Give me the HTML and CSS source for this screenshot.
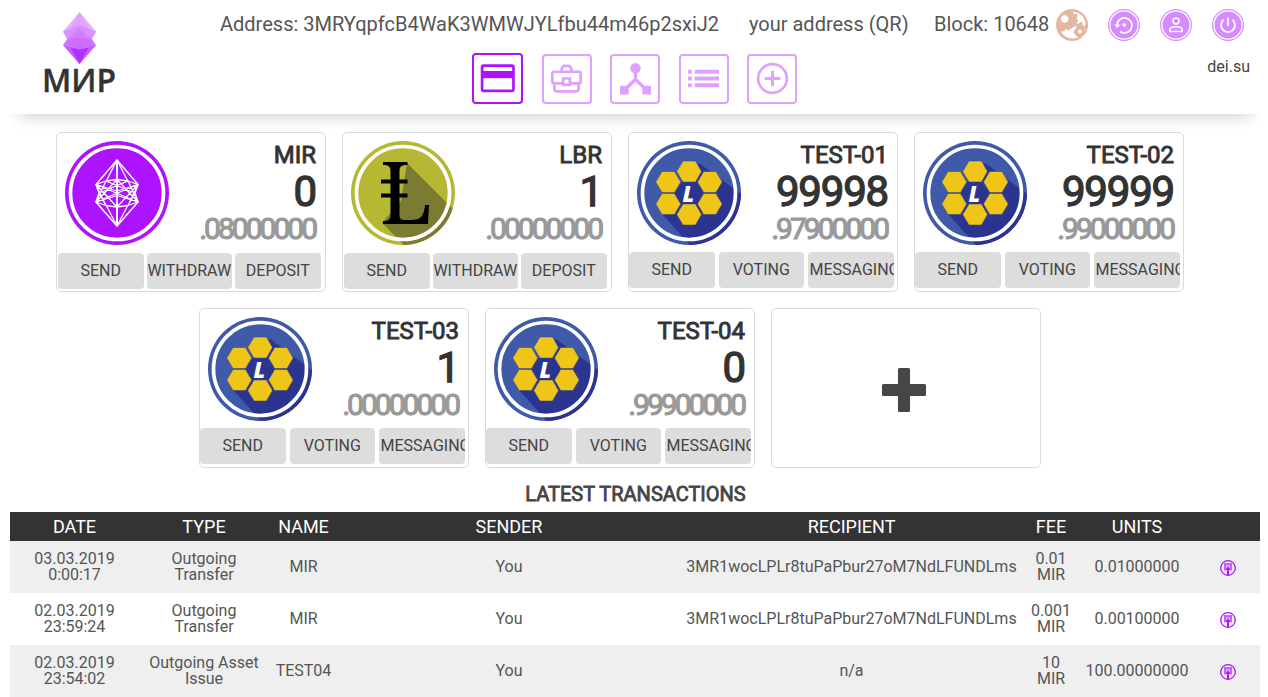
FILE: index.html
```html
<!DOCTYPE html>
<html lang="en">
<head>
<meta charset="utf-8">
<title>МИР</title>
<link rel="stylesheet" href="styles.css">
</head>
<body>
<svg class="defs" width="0" height="0" aria-hidden="true">
  <symbol id="coin-mir" viewBox="0 0 104 104">
    <circle cx="52" cy="52" r="52" fill="#ad13ff"/>
    <circle cx="52" cy="52" r="46.500" fill="none" stroke="#fff" stroke-width="3.700"/>
    <g fill="none" stroke="#fff" stroke-width="1.300" stroke-linejoin="round">
      <path stroke-width="1.900" d="M52 19V85"/>
      <path stroke-width="1.500" d="M52 19L31 43.500 34 52 31 61 52 85 73 61 70 52 73 43.500Z"/>
      <path d="M52 19L41 40.500M52 19L63 40.500M52 85L41 64M52 85L63 64"/>
      <path d="M31 43.500L41 40 52 38.500 63 40 73 43.500 52 50ZM31 61L41 64.500 52 66 63 64.500 73 61 52 54.500Z"/>
      <path d="M31 43.500L73 61M73 43.500L31 61M41 40L70 52 63 64.500M63 40L34 52 41 64.500M31 43.500L41 64.500M73 43.500L63 64.500M31 61L41 40M73 61L63 40M52 38.500L31 61M52 38.500L73 61M52 66L31 43.500M52 66L73 43.500"/>
    </g>
  </symbol>
  <symbol id="coin-lbr" viewBox="0 0 104 104">
    <clipPath id="lbr-clip"><circle cx="52" cy="52" r="52"/></clipPath>
    <circle cx="52" cy="52" r="52" fill="#b6b834"/>
    <path d="M56 22L104 70V104H53L31 82 50 60Z" fill="#7c7b32" clip-path="url(#lbr-clip)"/>
    <circle cx="52" cy="52" r="46.500" fill="none" stroke="#fff" stroke-width="3.700"/>
    <path fill="#000" d="M32 21H56.500V24C51 24 48.500 25 48.500 30V38.500H56.500V42.500H48.500V52.500H56.500V56.500H48.500V74C48.500 78 50 79 55 79H60C69 79 73 76 74 64H78L77 83H32V80C37 80 39.500 79 39.500 74V56.500H30V52.500H39.500V42.500H30V38.500H39.500V30C39.500 25 37 24 32 24Z"/>
  </symbol>
  <symbol id="coin-test" viewBox="0 0 104 104">
    <clipPath id="test-clip"><circle cx="52" cy="52" r="52"/></clipPath>
    <circle cx="52" cy="52" r="52" fill="#3e5aa8"/>
    <path d="M62 22L104 53V104H53L25 73 45 40Z" fill="#2b358f" clip-path="url(#test-clip)"/>
    <circle cx="52" cy="52" r="46.500" fill="none" stroke="#fff" stroke-width="3.700"/>
    <g fill="#efc517" stroke="#2f3d91" stroke-width=".5">
      <path d="M39.700 30.500L46 20H58.500L64.500 30.500 58.500 41H46Z"/>
      <path d="M39.700 73.500L46 63H58.500L64.500 73.500 58.500 84H46Z"/>
      <path d="M18.700 41L25 30.500H37.500L43.700 41 37.500 51.500H25Z"/>
      <path d="M60.500 41L66.700 30.500H79L85.200 41 79 51.500H66.700Z"/>
      <path d="M18.700 63L25 52.500H37.500L43.700 63 37.500 73.500H25Z"/>
      <path d="M60.500 63L66.700 52.500H79L85.200 63 79 73.500H66.700Z"/>
    </g>
    <text x="45.500" y="60.500" class="coin-letter">L</text>
  </symbol>
  <symbol id="tx-link" viewBox="0 0 16 16">
    <circle cx="8" cy="8" r="7.300" fill="none" stroke="#ad13ff" stroke-width="1.300"/>
    <path d="M4 3H12V10.500H10.500L9.500 9H6.500L5.500 10.500H4Z" fill="#c561ff"/>
    <path d="M6 5H10V8H6Z" fill="#dca0ff"/>
    <path d="M8 6.500L10.500 10H9V15.300H7V10H5.500Z" fill="#ad13ff"/>
  </symbol>
</svg>

<header class="header">
  <a class="logo">
    <svg class="logo-gem" viewBox="0 0 33 52">
      <path d="M16.500 0L33 19.500 16.500 41 0 19.500Z" fill="#e4b3ff"/>
      <path d="M16.500 0L27 17 16.500 13 6 17Z" fill="#e0a6ff"/>
      <path d="M0 19.500L16.500 13 33 19.500 28.500 28H4.500Z" fill="#d891ff"/>
      <path d="M16.500 52L0 33 4 27 16.500 36 29 27 33 33Z" fill="#cf7dff"/>
      <path d="M5 28L16.500 25 28 28 30 35 16.500 38 3 35Z" fill="#cb70ff"/>
      <path d="M16.500 16L29 28 16.500 39 4 28Z" fill="#cc70ff" opacity=".55"/>
      <path d="M0 33L8 35.500 16.500 52Z" fill="#c55cff"/>
      <path d="M33 33L25 35.500 16.500 52Z" fill="#c55cff"/>
      <path d="M7.500 35.500L16.500 37.500 25.500 35.500 16.500 52Z" fill="#b42eff"/>
    </svg>
    <svg class="logo-name" viewBox="0 0 76 28"><text x="0" y="25" textLength="74" lengthAdjust="spacingAndGlyphs">МИР</text></svg>
  </a>
  <div class="header-main">
    <div class="info">
      <span class="info-address">Address: 3MRYqpfcB4WaK3WMWJYLfbu44m46p2sxiJ2</span>
      <span class="info-qr">your address (QR)</span>
      <span class="info-block">Block: 10648</span>
      <svg class="round" viewBox="0 0 32 32">
        <circle cx="16" cy="16" r="16" fill="#e2b8a2"/>
        <path fill="#fff" d="M17 2.500A13.700 13.700 0 0 1 29.500 15L28.500 17.500 26.500 16V13H24L22.500 15 20.500 13.500 22.500 11.500 20.500 9.500 22 6.500 20 4.500 17.500 5Z"/>
        <path fill="#fff" d="M5 22.500L8.500 22 9.500 20 12 21.500 14.500 20 17 18.500 19 17 20.500 18.500 18.500 21 17.500 23.500 19.500 26 22 28.500A13.700 13.700 0 0 1 5 22.500Z"/>
        <circle cx="8.700" cy="10" r="3.700" fill="#fff"/>
        <circle cx="24" cy="22.500" r="4.200" fill="#e2b8a2"/>
        <circle cx="24" cy="22.500" r="2" fill="#fff"/>
        <path fill="#fff" d="M28.500 19.500L29.500 21 28.500 22ZM26 27.500L27.500 26 28 27Z"/>
      </svg>
      <svg class="round" viewBox="0 0 32 32">
        <circle cx="16" cy="16" r="15.400" fill="#fff" stroke="#d68cff" stroke-width="1.200"/><circle cx="16" cy="16" r="13.500" fill="#d68cff"/>
        <path d="M9 17A7.500 7.500 0 1 1 12 22.500" fill="none" stroke="#fff" stroke-width="1.700"/>
        <path d="M6 15.500H12.500L9.200 19Z" fill="#fff"/><circle cx="16.200" cy="16" r="1.800" fill="#fff"/>
      </svg>
      <svg class="round" viewBox="0 0 32 32">
        <circle cx="16" cy="16" r="15.400" fill="#fff" stroke="#d68cff" stroke-width="1.200"/><circle cx="16" cy="16" r="13.500" fill="#d68cff"/>
        <circle cx="16" cy="12" r="3" fill="none" stroke="#fff" stroke-width="1.500"/>
        <path d="M9.700 22.500V21C9.700 18.300 13 17.800 16 17.800S22.300 18.300 22.300 21V22.500Z" fill="none" stroke="#fff" stroke-width="1.500"/>
      </svg>
      <svg class="round" viewBox="0 0 32 32">
        <circle cx="16" cy="16" r="15.400" fill="#fff" stroke="#d68cff" stroke-width="1.200"/><circle cx="16" cy="16" r="13.500" fill="#d68cff"/>
        <path d="M16 8.500V17M11.500 10.700A7 7 0 1 0 20.500 10.700" fill="none" stroke="#fff" stroke-width="1.800"/>
      </svg>
    </div>
    <div class="second">
      <nav class="nav">
        <a class="tab tab-active"><svg viewBox="0 0 34 34"><path d="M3.500 4.500H31Q32.500 4.500 32.500 6V27.500Q32.500 29 31 29H3.500Q2 29 2 27.500V6Q2 4.500 3.500 4.500Z" fill="none" stroke="currentColor" stroke-width="2.600"/><path d="M2 9.700H32V16.700H2Z" fill="currentColor"/></svg></a>
        <a class="tab"><svg viewBox="0 0 34 34"><g fill="none" stroke="currentColor" stroke-width="2.700"><path d="M12 9.500V6.500L14 4H20L22 6.500V9.500"/><rect x="2.400" y="10" width="29.200" height="12" rx="2"/><path d="M4.500 22V28.500L6 30.300H28L29.500 28.500V22"/></g><path d="M12.500 15.500H21.500V25H12.500Z" fill="#fff"/><path d="M13.500 17H20.500V23.500H13.500Z" fill="none" stroke="currentColor" stroke-width="2.800"/></svg></a>
        <a class="tab"><svg viewBox="0 0 34 34" fill="currentColor"><circle cx="17" cy="6.500" r="5.400"/><path d="M15.300 10H18.700V17L26.500 24.500H33V33.500H24V27L17 20.500 10 27V33.500H1V24.500H7.500L15.300 17Z"/></svg></a>
        <a class="tab"><svg viewBox="0 0 34 34" fill="currentColor"><path d="M1 8H5V12H1ZM8 8H33V12H8ZM1 15H5V19H1ZM8 15H33V19H8ZM1 22H5V26H1ZM8 22H33V26H8Z"/></svg></a>
        <a class="tab"><svg viewBox="0 0 34 34" fill="none" stroke="currentColor"><circle cx="17" cy="17" r="14.800" stroke-width="2.700"/><path d="M17 9V25M9 17H25" stroke-width="3"/></svg></a>
      </nav>
      <span class="site">dei.su</span>
    </div>
  </div>
</header>

<main>
  <section class="cards">
    <article class="card">
      <div class="card-top"><svg class="coin"><use href="#coin-mir"/></svg>
        <div class="balance"><div class="name">MIR</div><div class="whole">0</div><div class="part">.08000000</div></div></div>
      <div class="actions"><button>SEND</button><button>WITHDRAW</button><button>DEPOSIT</button></div>
    </article>
    <article class="card">
      <div class="card-top"><svg class="coin"><use href="#coin-lbr"/></svg>
        <div class="balance"><div class="name">LBR</div><div class="whole">1</div><div class="part">.00000000</div></div></div>
      <div class="actions"><button>SEND</button><button>WITHDRAW</button><button>DEPOSIT</button></div>
    </article>
    <article class="card">
      <div class="card-top"><svg class="coin"><use href="#coin-test"/></svg>
        <div class="balance"><div class="name">TEST-01</div><div class="whole">99998</div><div class="part">.97900000</div></div></div>
      <div class="actions actions-asset"><button>SEND</button><button>VOTING</button><button class="cut">MESSAGING</button></div>
    </article>
    <article class="card">
      <div class="card-top"><svg class="coin"><use href="#coin-test"/></svg>
        <div class="balance"><div class="name">TEST-02</div><div class="whole">99999</div><div class="part">.99000000</div></div></div>
      <div class="actions actions-asset"><button>SEND</button><button>VOTING</button><button class="cut">MESSAGING</button></div>
    </article>
    <article class="card">
      <div class="card-top"><svg class="coin"><use href="#coin-test"/></svg>
        <div class="balance"><div class="name">TEST-03</div><div class="whole">1</div><div class="part">.00000000</div></div></div>
      <div class="actions actions-asset"><button>SEND</button><button>VOTING</button><button class="cut">MESSAGING</button></div>
    </article>
    <article class="card">
      <div class="card-top"><svg class="coin"><use href="#coin-test"/></svg>
        <div class="balance"><div class="name">TEST-04</div><div class="whole">0</div><div class="part">.99900000</div></div></div>
      <div class="actions actions-asset"><button>SEND</button><button>VOTING</button><button class="cut">MESSAGING</button></div>
    </article>
    <article class="card card-add">
      <svg viewBox="0 0 44 44"><path d="M17.500 0H26.500Q28 0 28 1.500V16H42.500Q44 16 44 17.500V26.500Q44 28 42.500 28H28V42.500Q28 44 26.500 44H17.500Q16 44 16 42.500V28H1.500Q0 28 0 26.500V17.500Q0 16 1.500 16H16V1.500Q16 0 17.500 0Z" fill="#464646"/></svg>
    </article>
  </section>

  <h2 class="title">LATEST TRANSACTIONS</h2>
  <table class="tx">
    <colgroup><col class="c-date"><col class="c-type"><col class="c-name"><col class="c-sender"><col class="c-recipient"><col class="c-fee"><col class="c-units"><col class="c-link"></colgroup>
    <thead><tr><th>DATE</th><th>TYPE</th><th>NAME</th><th>SENDER</th><th>RECIPIENT</th><th>FEE</th><th>UNITS</th><th></th></tr></thead>
    <tbody>
      <tr><td>03.03.2019<br>0:00:17</td><td>Outgoing<br>Transfer</td><td>MIR</td><td>You</td><td>3MR1wocLPLr8tuPaPbur27oM7NdLFUNDLms</td><td>0.01<br>MIR</td><td>0.01000000</td><td><svg class="link"><use href="#tx-link"/></svg></td></tr>
      <tr><td>02.03.2019<br>23:59:24</td><td>Outgoing<br>Transfer</td><td>MIR</td><td>You</td><td>3MR1wocLPLr8tuPaPbur27oM7NdLFUNDLms</td><td>0.001<br>MIR</td><td>0.00100000</td><td><svg class="link"><use href="#tx-link"/></svg></td></tr>
      <tr><td>02.03.2019<br>23:54:02</td><td>Outgoing Asset<br>Issue</td><td>TEST04</td><td>You</td><td>n/a</td><td>10<br>MIR</td><td>100.00000000</td><td><svg class="link"><use href="#tx-link"/></svg></td></tr>
    </tbody>
  </table>
</main>
</body>
</html>
```

FILE: styles.css
```css
* { box-sizing: border-box; }
body {
  margin: 0;
  height: 697px;
  overflow: hidden;
  background: #fff;
  color: #555;
  font-family: Roboto, "Liberation Sans", sans-serif;
  font-size: 16px;
}
svg { display: block; flex: none; }
.defs { position: absolute; }

.header {
  display: flex;
  height: 114px;
  margin: 0 8px 0 10px;
  background: #fff;
  box-shadow: 0 12px 14px -9px rgba(0, 0, 0, .18);
  clip-path: inset(0 0 -24px 0);
}
.logo { flex: none; width: 210px; padding: 12px 0 0 32px; }
.logo-gem { width: 33px; height: 52px; margin-left: 21px; }
.logo-name { width: 76px; height: 28px; margin-top: 3px; overflow: visible; }
.logo-name text { font: 600 32px "Open Sans", "Noto Sans", sans-serif; fill: #333; stroke: #333; stroke-width: .4px; }
.header-main { flex: 1; min-width: 0; }
.info { display: flex; align-items: center; height: 32px; margin-top: 9px; font-size: 20px; white-space: nowrap; }
.info span { flex: none; padding-bottom: 2px; }
.info .info-address { width: 529px; }
.info .info-qr { width: 185px; }
.info .info-block { width: 122px; }
.round { width: 32px; height: 32px; margin-right: 20px; }
.second { display: flex; justify-content: space-between; padding: 12px 10px 0 252px; }
.nav { display: flex; align-items: center; gap: 18.6px; height: 51px; }
.tab {
  display: flex;
  align-items: center;
  justify-content: center;
  width: 50px;
  height: 50px;
  border: 2px solid #dfa1ff;
  border-radius: 4px;
  color: #dfa1ff;
}
.tab svg { width: 33px; height: 33px; }
.tab-active { width: 51px; height: 51px; border-color: #ad13ff; color: #ad13ff; }
.tab-active svg { width: 35px; height: 35px; }
.site { margin-top: 4px; line-height: 19px; color: #444; }

.cards { display: flex; flex-wrap: wrap; justify-content: center; gap: 16px; width: 1140px; margin: 18px 0 0 50px; }
.card { width: 270px; height: 160px; border: 1px solid #dadada; border-radius: 5px; overflow: hidden; }
.card-top { display: flex; justify-content: space-between; height: 120px; padding: 8px 9px 0 8px; }
.coin { width: 104px; height: 104px; }
.coin-letter { font: italic 800 22px "Open Sans", sans-serif; fill: #fff; }
.balance { padding-top: 1px; color: #333; font-weight: 400; text-align: right; -webkit-text-stroke: .9px; }
.name { height: 27px; line-height: 27px; font-size: 24px; }
.whole { height: 46px; line-height: 46px; font-size: 42px; letter-spacing: -1.2px; -webkit-text-stroke: 1.3px; }
.part { height: 30px; line-height: 28px; font-size: 30px; letter-spacing: -3px; padding-right: 1px; color: #999; -webkit-text-stroke: 1.1px; }
.actions { display: flex; gap: 3px; padding-left: 1px; }
.actions button {
  width: 85.5px;
  height: 36px;
  padding: 0 0 2px;
  border: 0;
  border-radius: 4px;
  background: #ddd;
  color: #444;
  font: 16px Roboto, sans-serif;
  overflow: hidden;
  white-space: nowrap;
}
.actions-asset { gap: 4px; padding-left: 0; margin-top: -1px; }
.actions .cut { padding-left: 1.5px; text-align: left; }
.card-add { display: flex; align-items: center; justify-content: center; padding: 4px 4px 0 0; }
.card-add svg { width: 44px; height: 44px; }

.title { margin: 16px 0 7px 3px; line-height: 21px; font-size: 20px; font-weight: 400; text-align: center; color: #444; -webkit-text-stroke: .8px; }
.tx { width: 1250px; margin-left: 10px; border-collapse: collapse; table-layout: fixed; text-align: center; line-height: 16px; }
.tx th { height: 29px; padding: 0; background: #333; color: #fff; font-size: 18px; font-weight: 400; }
.tx td { height: 52px; padding: 0; }
.tx tbody tr:nth-child(odd) { background: #efefef; }
.c-date { width: 129px; }
.c-type { width: 130px; }
.c-name { width: 69px; }
.c-sender { width: 342px; }
.c-recipient { width: 343px; }
.c-fee { width: 56px; }
.c-units { width: 116px; }
.link { width: 16px; height: 16px; margin: 2px auto 0; }
```
